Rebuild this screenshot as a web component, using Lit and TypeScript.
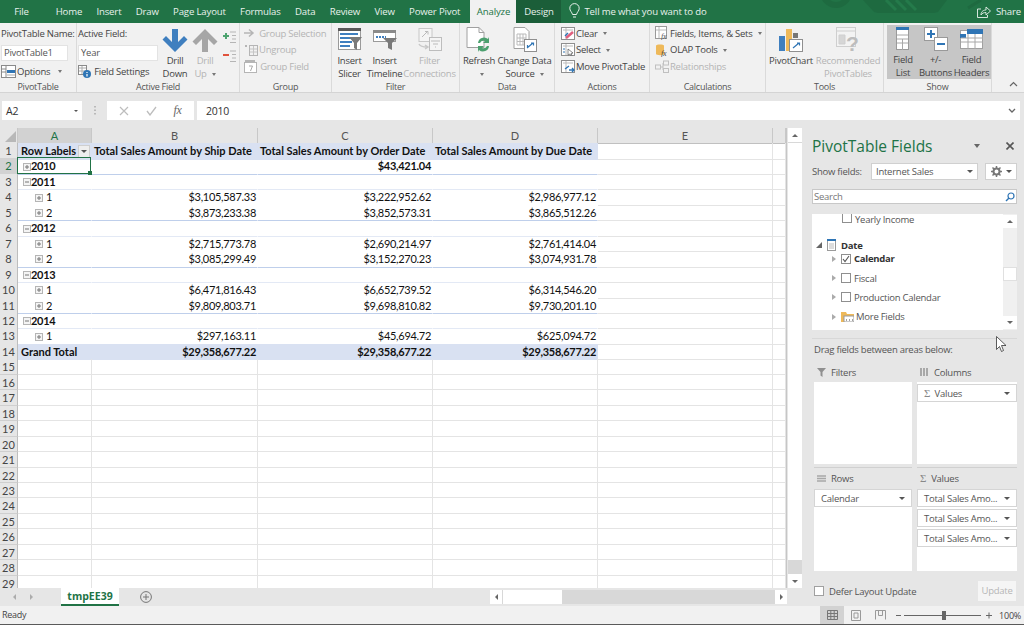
import { LitElement, html, css, svg, nothing } from 'lit';
import { customElement } from 'lit/decorators.js';

const ic = (w: number, h: number, inner: unknown) =>
  html`<svg class="ic" width="${w}" height="${h}" viewBox="0 0 ${w} ${h}" fill="none">${inner}</svg>`;

const caret = html`<i class="caret"></i>`;

// ribbon icons
const icons = {
  options: ic(15, 13, svg`<rect x=".5" y=".5" width="14" height="12" fill="#fff" stroke="#8a8a8a"/><path d="M5 1v11M1 4h4M1 7h4" stroke="#8a8a8a"/><rect x="6" y="5" width="8" height="3" fill="#2f75b5"/><path d="M6 10h8" stroke="#aaa"/>`),
  fieldSettings: ic(13, 13, svg`<rect x=".5" y=".5" width="8" height="9" fill="#fff" stroke="#8a8a8a"/><path d="M1 3h7M1 6h7M4 1v8" stroke="#aaa"/><circle cx="9" cy="9" r="4" fill="#2f75b5"/><path d="M9 7v1M9 9v2.5" stroke="#fff" stroke-width="1.2"/>`),
  drillDown: ic(26, 24, svg`<path d="M10 1h6v13l6-6 3.500 3.500L13 24 .5 11.500 4 8l6 6z" fill="#3f7fbf"/>`),
  drillUp: ic(26, 24, svg`<path d="M10 24h6V11l6 6 3.500-3.500L13 1 .5 13.500 4 17l6-6z" fill="#a6a6a6"/>`),
  expand: ic(15, 13, svg`<path d="M8 1h6M10 4.500h4M10 8h4M8 11.500h6" stroke="#b5b5b5"/><path d="M1 5h6M4 2v6" stroke="#4da36f" stroke-width="2"/>`),
  collapse: ic(15, 13, svg`<path d="M8 1h6M10 4.500h4M10 8h4M8 11.500h6" stroke="#b5b5b5"/><path d="M1 5h6" stroke="#e0533c" stroke-width="2"/>`),
  groupSel: ic(12, 10, svg`<path d="M0 5h8M5 1.500 9 5 5 8.500" stroke="#b5b5b5" stroke-width="1.500"/>`),
  ungroup: ic(14, 13, svg`<path d="M1 2l2 2M3 2 1 4" stroke="#b5b5b5"/><rect x="5.500" y="2.500" width="8" height="10" stroke="#b5b5b5"/><path d="M9.500 3v9M6 6h7M6 9h7" stroke="#c5c5c5"/>`),
  groupField: ic(13, 13, svg`<rect x=".5" y="2.500" width="12" height="10" fill="#fff" stroke="#b5b5b5"/><path d="M1 1h10" stroke="#b5b5b5" stroke-width="2"/><path d="M5 6h3.500L6.500 11" stroke="#a8a8a8"/>`),
  slicer: ic(24, 23, svg`<rect x=".5" y=".5" width="22" height="21" fill="#fff" stroke="#9a9a9a"/><rect width="23" height="3" fill="#595959"/><path d="M2 6h18M2 10h12M2 14h12M2 18h10" stroke="#3f7fbf" stroke-width="2"/><path d="M11 9h13l-5 6v7l-3-2v-5z" fill="#7a7a7a"/>`),
  timeline: ic(24, 21, svg`<rect x=".5" y="3.500" width="22" height="9" fill="#fff" stroke="#9a9a9a"/><rect y="1" width="23" height="3" fill="#8a8a8a"/><path d="M3 8h10" stroke="#3f7fbf" stroke-dasharray="2 1" stroke-width="2"/><path d="M10 9h14l-5 5v7l-4-2v-5z" fill="#7a7a7a"/>`),
  filterConn: ic(24, 23, svg`<rect x="1" y=".5" width="13" height="13" fill="#f5f5f5" stroke="#c8c8c8"/><path d="M4 9l5-5M7 3.500h3v3" stroke="#bbb"/><path d="M1 16c1 2 4 3 8 3M7 17l3 2-3 2" stroke="#c8c8c8" stroke-width="1.500"/><rect x="11.500" y="9.500" width="12" height="13" fill="#f5f5f5" stroke="#bdbdbd"/><path d="M13 13h9M15 16h5M17 19h1" stroke="#bbb"/>`),
  refresh: ic(26, 26, svg`<path d="M1 .5h12l5 5v15H1z" fill="#fff" stroke="#a0a0a0"/><path d="M13 .5v5h5" stroke="#a0a0a0"/><path d="M12 16a6 6 0 0 1 10-4l1-2v6h-6l2-2a4 4 0 0 0-5 2zM23 19a6 6 0 0 1-10 4l-1 2v-6h6l-2 2a4 4 0 0 0 5-2z" fill="#4ca06f"/>`),
  changeSrc: ic(24, 26, svg`<path d="M1 .5h11l4 4v17H1z" fill="#fff" stroke="#a0a0a0"/><path d="M4 7h9v11H4zM7 7v11M10 7v11M4 11h9M4 14.500h9" stroke="#bbb"/><rect x="11.500" y="12.500" width="12" height="12" fill="#fff" stroke="#8f8f8f"/><path d="M14 21l6-5M18 16h2.500v2.500M14.500 20.500V18" stroke="#2f75b5" stroke-width="1.200"/>`),
  clear: ic(14, 13, svg`<rect x=".5" y=".5" width="13" height="12" fill="#fff" stroke="#8f8f8f"/><path d="M2 3h10M5 1v11" stroke="#bbb"/><path d="M5 11l7-6" stroke="#e0607e" stroke-width="2.500"/><path d="M7 6l-3 3" stroke="#2f75b5" stroke-width="1.500"/>`),
  select: ic(14, 13, svg`<rect x=".5" y=".5" width="13" height="12" fill="#fff" stroke="#8f8f8f"/><path d="M2 3h10M5 1v11" stroke="#bbb"/><path d="M7 6l5 4-2 .5 1 2-1 .5-1-2-2 1z" fill="#fff" stroke="#555" stroke-width=".7"/><path d="M2 6h2M2 9h2" stroke="#2f75b5"/>`),
  move: ic(14, 13, svg`<rect x=".5" y=".5" width="13" height="12" fill="#fff" stroke="#8f8f8f"/><path d="M2 3h10M5 1v11" stroke="#bbb"/><path d="M4 9l4-3M8 10h5M11 8l2 2-2 2" stroke="#2f75b5" stroke-width="1.300"/>`),
  fields: ic(14, 14, svg`<rect x=".5" y=".5" width="11" height="12" fill="#fff" stroke="#9a9a9a"/><path d="M1 4h10M4 1v11" stroke="#bbb"/><text x="6" y="13" font-size="8" font-style="italic" font-family="Liberation Serif" fill="#555">fx</text>`),
  olap: ic(14, 14, svg`<path d="M1 2.500C1 1 9 1 9 2.500V11c0 1.500-8 1.500-8 0z" fill="#eeb95a"/><text x="6" y="13" font-size="8" font-style="italic" font-family="Liberation Serif" fill="#444">fx</text>`),
  rel: ic(14, 13, svg`<rect x=".5" y="5" width="5" height="4" stroke="#c0c0c0"/><rect x="8.500" y="1" width="5" height="4" stroke="#c0c0c0"/><rect x="8.500" y="8.500" width="5" height="4" stroke="#c0c0c0"/><path d="M6 7h2M8 3v7" stroke="#c0c0c0"/>`),
  chart: ic(26, 24, svg`<rect x="1" y="8" width="6" height="15" fill="#3f7fbf"/><rect x="8" y="1" width="6" height="22" fill="#eeb95a"/><rect x="15" y="5" width="5" height="5" fill="#777"/><rect x="11.500" y="11.500" width="13" height="12" fill="#fff" stroke="#8f8f8f"/><path d="M15 20l6-5M19 15h2.500v2.500" stroke="#2f75b5" stroke-width="1.200"/>`),
  recommended: ic(24, 25, svg`<rect x=".5" y=".5" width="19" height="19" fill="#f3f3f3" stroke="#cfcfcf"/><path d="M1 4h18M3 8h6v9H3z" fill="#d6d6d6" stroke="#cfcfcf"/><text x="10" y="24" font-size="21" font-weight="700" font-family="Liberation Sans" fill="#bdbdbd">?</text>`),
  fieldList: ic(14, 24, svg`<rect x=".5" y=".5" width="12" height="22" fill="#fff" stroke="#9a9a9a"/><rect width="13" height="3" fill="#2f75b5"/><path d="M1 8h11M1 12h11M1 16h11M6.500 12v11" stroke="#a8a8a8"/>`),
  plusMinus: ic(24, 24, svg`<rect x=".5" y=".5" width="13" height="13" fill="#fff" stroke="#999"/><path d="M3 7h8M7 3v8" stroke="#2f75b5" stroke-width="2"/><rect x="10.500" y="10.500" width="13" height="13" fill="#fff" stroke="#999"/><path d="M13 17h8" stroke="#2f75b5" stroke-width="2"/>`),
  headers: ic(24, 22, svg`<rect x=".5" y="2.500" width="22" height="18" fill="#fff" stroke="#a0a0a0"/><rect x="7" y="1" width="16" height="5" fill="#2f75b5"/><rect x="0" y="6" width="6" height="4" fill="#2f75b5"/><path d="M1 10h22M1 14h22M8 6v15M15 6v15" stroke="#a8a8a8"/>`),
};

type Big = { icon: unknown; lines: unknown[]; off?: boolean; width: number };
const big = (b: Big) => html`
  <div class="big ${b.off ? 'off' : ''}" style="width:${b.width}px">
    <div class="big-icon">${b.icon}</div>
    ${b.lines.map((l) => html`<div class="big-line">${l}</div>`)}
  </div>`;
const small = (icon: unknown, text: unknown, off = false) => html`
  <div class="small ${off ? 'off' : ''}">${icon}<span>${text}</span></div>`;
const group = (label: string, width: number, body: unknown) => html`
  <section class="group" style="width:${width}px">
    <div class="group-body">${body}</div>
    <div class="group-label">${label}</div>
  </section>`;

const TABS = ['Home', 'Insert', 'Draw', 'Page Layout', 'Formulas', 'Data', 'Review', 'View', 'Power Pivot'];

type Row = { a: string; b?: string; c?: string; d?: string; kind: 'head' | 'year' | 'sub' | 'first' | 'total' };
const ROWS: Row[] = [
  { a: 'Row Labels', b: 'Total Sales Amount by Ship Date', c: 'Total Sales Amount by Order Date', d: 'Total Sales Amount by Due Date', kind: 'head' },
  { a: '2010', c: '$43,421.04', kind: 'first' },
  { a: '2011', kind: 'year' },
  { a: '1', b: '$3,105,587.33', c: '$3,222,952.62', d: '$2,986,977.12', kind: 'sub' },
  { a: '2', b: '$3,873,233.38', c: '$3,852,573.31', d: '$3,865,512.26', kind: 'sub' },
  { a: '2012', kind: 'year' },
  { a: '1', b: '$2,715,773.78', c: '$2,690,214.97', d: '$2,761,414.04', kind: 'sub' },
  { a: '2', b: '$3,085,299.49', c: '$3,152,270.23', d: '$3,074,931.78', kind: 'sub' },
  { a: '2013', kind: 'year' },
  { a: '1', b: '$6,471,816.43', c: '$6,652,739.52', d: '$6,314,546.20', kind: 'sub' },
  { a: '2', b: '$9,809,803.71', c: '$9,698,810.82', d: '$9,730,201.10', kind: 'sub' },
  { a: '2014', kind: 'year' },
  { a: '1', b: '$297,163.11', c: '$45,694.72', d: '$625,094.72', kind: 'sub' },
  { a: 'Grand Total', b: '$29,358,677.22', c: '$29,358,677.22', d: '$29,358,677.22', kind: 'total' },
];

const boxPlus = html`<svg class="ic" width="8" height="8" viewBox="0 0 8 8"><rect x=".5" y=".5" width="7" height="7" fill="#f4f4f4" stroke="#b5b5b5"/><path d="M2 4h4M4 2v4" stroke="#777"/></svg>`;
const boxMinus = html`<svg class="ic" width="8" height="8" viewBox="0 0 8 8"><rect x=".5" y=".5" width="7" height="7" fill="#f4f4f4" stroke="#b5b5b5"/><path d="M2 4h4" stroke="#777"/></svg>`;

const chip = (text: string) => html`<div class="chip"><span>${text}</span><i class="caret dark"></i></div>`;
const sigma = html`<span class="sigma">Σ</span>`;

@customElement('app-root')
export class AppRoot extends LitElement {
  static styles = css`
    :host {
      display: block;
      width: 1024px;
      height: 625px;
      overflow: hidden;
      position: relative;
      background: #e6e6e6;
      font-family: "Open Sans", "Noto Sans", sans-serif;
      font-size: 9.5px;
      letter-spacing: -0.25px;
      color: #444;
    }
    .ic { display: block; flex: none; }
    .caret {
      display: inline-block;
      border: 2.5px solid transparent;
      border-top: 3px solid #777;
      border-bottom: 0;
      margin-left: 5px;
      vertical-align: middle;
    }
    .caret.dark { border-top-color: #555; border-width: 3px 3.5px 0; margin: 0; }

    /* title bar */
    .titlebar {
      height: 23px;
      background: #217346;
      color: #e8f1ec;
      display: flex;
      align-items: stretch;
      font-size: 9.6px;
      letter-spacing: -0.15px;
      position: relative;
      overflow: hidden;
    }
    .watermark { position: absolute; left: 800px; top: 0; }
    .tab { padding: 5px 7.15px 0; position: relative; white-space: nowrap; }
    .tab.file { width: 43px; padding: 5px 0 0; text-align: center; margin-right: 5.5px; box-sizing: border-box; }
    .tab.active { background: #f1f1f1; color: #217346; width: 46px; padding: 5px 0 0; text-align: center; box-sizing: border-box; margin-left: 3px; }
    .tab.design { background: #1b5e39; width: 45px; padding: 5px 0 0; text-align: center; box-sizing: border-box; }
    .tell { display: flex; align-items: flex-start; gap: 4px; padding: 3px 0 0 8px; position: relative; }
    .tell span { padding-top: 2px; }
    .share { margin-left: auto; display: flex; gap: 5px; padding: 5px 3px 0 0; position: relative; }

    /* ribbon */
    .ribbon {
      height: 70px;
      box-sizing: border-box;
      background: #f1f1f1;
      border-bottom: 1px solid #d4d4d4;
      display: flex;
      position: relative;
    }
    .group {
      height: 69px;
      border-right: 1px solid #dadada;
      display: flex;
      flex-direction: column;
      box-sizing: border-box;
      flex: none;
    }
    .group-body { flex: 1; display: flex; padding: 2px 1px 0; min-height: 0; }
    .group-label { height: 11px; line-height: 11px; text-align: center; color: #555; font-size: 9px; }
    .big { display: flex; flex-direction: column; align-items: center; text-align: center; flex: none; line-height: 13px; white-space: nowrap; }
    .big-icon { height: 29px; display: flex; align-items: center; justify-content: center; }
    .off { color: #b4b4b4; }
    .stack { display: flex; flex-direction: column; gap: 2.5px; padding-top: 1px; flex: none; }
    .small { height: 14px; display: flex; align-items: center; gap: 1px; white-space: nowrap; }
    .field-label { height: 15px; line-height: 15px; white-space: nowrap; }
    .ribbon-input {
      height: 16px;
      box-sizing: border-box;
      background: #fff;
      border: 1px solid #e3e3e3;
      padding-left: 2px;
      line-height: 14px;
      margin: 4px 0 3px;
      color: #555;
    }
    .pm { display: flex; flex-direction: column; gap: 6px; padding: 6px 0 0 2px; }
    .show { background: #c6c6c6; display: flex; height: 54px; margin: 0 0 0 2px; padding: 0 1px; }
    .collapse { position: absolute; right: 6px; bottom: 5px; }

    /* formula bar */
    .formula {
      height: 35px;
      box-sizing: border-box;
      padding: 8px 4px 8px 2px;
      display: flex;
      align-items: stretch;
      background: #e6e6e6;
      font-size: 10.5px;
    }
    .name-box {
      width: 80px;
      background: #fff;
      display: flex;
      align-items: center;
      justify-content: space-between;
      padding: 0 4px;
      box-sizing: border-box;
      color: #333;
    }
    .dots { width: 25px; display: flex; align-items: center; justify-content: center; }
    .fx {
      width: 87px;
      background: #fff;
      display: flex;
      align-items: center;
      justify-content: space-around;
      padding: 0 4px;
      box-sizing: border-box;
      margin-right: 3px;
      color: #666;
      font: italic 12px "Liberation Serif", serif;
    }
    .input {
      flex: 1;
      background: #fff;
      display: flex;
      align-items: center;
      justify-content: space-between;
      padding: 0 4px 0 9px;
      color: #333;
    }

    /* sheet */
    .main { display: flex; height: 478px; }
    .sheet { width: 804px; flex: none; display: flex; flex-direction: column; }
    .sheet-top { height: 460px; display: flex; flex: none; }
    .grid { width: 787px; flex: none; overflow: hidden; background: #fff; border-right: 1px solid #c6c6c6; box-sizing: border-box; }
    .row {
      display: grid;
      grid-template-columns: 18px 74px 166px 175px 165px 175px 13px;
      height: 15.46px;
      font-family: "Lato", sans-serif;
      font-size: 11px;
      letter-spacing: 0;
      color: #111;
    }
    .cell {
      box-sizing: border-box;
      border-right: 1px solid #e4e4e4;
      border-bottom: 1px solid #e4e4e4;
      line-height: 14.5px;
      white-space: nowrap;
      overflow: hidden;
      padding: 1px 2px 0;
      position: relative;
    }
    .num { text-align: right; letter-spacing: -0.3px; padding-right: 1px; }
    .rh {
      background: #e6e6e6;
      border-right: 1px solid #bdbdbd;
      border-bottom: 1px solid #cfcfcf;
      text-align: center;
      padding: 1px 0 0;
      color: #444;
    }
    .rh.sel { background: #d2d2d2; color: #217346; }
    .pv { border-right-color: transparent; border-bottom-color: transparent; }
    .bold { font-weight: 700; }
    .blue { background: #d9e1f2; }
    .rule { border-top: 1px solid #bfcfeb; padding-top: 0; }
    .faint { border-top: 1px solid #e3e9f5; padding-top: 0; }
    .label { display: flex; align-items: center; gap: 0; overflow: visible; padding-left: 3px; }
    .label.l1 { padding-left: 5px; letter-spacing: -0.3px; }
    .label.l2 { padding-left: 17px; gap: 3px; }
    .row-filter {
      margin-left: auto;
      width: 12px;
      height: 13px;
      box-sizing: border-box;
      background: #eee;
      border: 1px solid #cfcfcf;
      display: flex;
      align-items: center;
      justify-content: center;
      margin-right: -1px;
    }
    .selected::after {
      content: '';
      position: absolute;
      inset: -1px 0 0 -1px;
      border: 1.5px solid #217346;
    }
    .handle { position: absolute; right: -1px; bottom: -1px; width: 4px; height: 4px; background: #217346; z-index: 2; }
    .selected { overflow: visible; }
    .head-row { height: 15px; font-size: 11px; font-family: "Lato", sans-serif; letter-spacing: 0; color: #555; display: grid; grid-template-columns: 18px 74px 166px 175px 165px 175px 13px; background: #e6e6e6; }
    .ch { box-sizing: border-box; text-align: center; line-height: 15px; border-right: 1px solid #c8c8c8; border-bottom: 1px solid #c0c0c0; }
    .ch.sel { background: #d2d2d2; color: #217346; border-bottom: 1px solid #217346; }
    .ch.corner { position: relative; }
    .ch.corner::after {
      content: '';
      position: absolute;
      right: 1px;
      bottom: 1px;
      border-left: 11px solid transparent;
      border-bottom: 11px solid #b8b8b8;
    }

    .vscroll { width: 14px; margin-left: 1px; display: flex; flex-direction: column; background: #d8d8d8; }
    .sb-btn { background: #fff; display: flex; align-items: center; justify-content: center; flex: none; }
    .tri-up { border: 3px solid transparent; border-bottom: 3px solid #666; border-top: 0; }
    .tri-down { border: 3px solid transparent; border-top: 3px solid #666; border-bottom: 0; }
    .tri-left { border: 3px solid transparent; border-right: 3px solid #666; border-left: 0; }
    .tri-right { border: 3px solid transparent; border-left: 3px solid #666; border-right: 0; }
    .vscroll .sb-btn { height: 14px; }
    .vthumb { height: 417px; background: #fff; margin-top: 1px; flex: none; }

    .tabs {
      height: 18px;
      flex: none;
      display: flex;
      align-items: stretch;
      background: #e6e6e6;
    }
    .tab-nav { width: 61px; display: flex; align-items: center; gap: 14px; padding-left: 13px; box-sizing: border-box; }
    .tab-nav i { opacity: .45; }
    .sheet-tab {
      width: 58px;
      background: #fff;
      color: #217346;
      font-weight: 700;
      font-size: 10.5px;
      letter-spacing: 0;
      text-align: center;
      line-height: 16px;
      border-bottom: 2px solid #217346;
      box-sizing: border-box;
    }
    .add { width: 54px; display: flex; align-items: center; justify-content: center; }
    .hscroll { margin-left: auto; width: 297px; margin-right: 17px; display: flex; background: #d8d8d8; height: 14px; margin-top: 2px; }
    .hscroll .sb-btn { width: 12px; }
    .hthumb { width: 59px; background: #fff; margin-left: 1px; margin-right: auto; }

    /* panel */
    .panel {
      width: 220px;
      flex: none;
      box-sizing: border-box;
      padding: 0 7px 0 8px;
      display: flex;
      flex-direction: column;
      color: #555;
      font-size: 9.5px;
    }
    .panel-title { height: 35px; display: flex; align-items: center; color: #217346; font-size: 15.5px; letter-spacing: 0; }
    .panel-title .caret { margin-left: auto; border-top-color: #666; border-width: 4px 3.5px 0; }
    .panel-title .x { margin-left: 26px; margin-right: 3px; }
    .show-row { display: flex; align-items: center; height: 17px; }
    .show-label { width: 59px; flex: none; }
    .select {
      width: 107px;
      height: 17px;
      background: #fff;
      border: 1px solid #d0d0d0;
      box-sizing: border-box;
      display: flex;
      align-items: center;
      justify-content: space-between;
      padding: 0 4px;
    }
    .gear {
      margin-left: 7px;
      width: 32px;
      height: 17px;
      background: #fff;
      border: 1px solid #d0d0d0;
      box-sizing: border-box;
      display: flex;
      align-items: center;
      justify-content: center;
      gap: 4px;
    }
    .search {
      margin-top: 9px;
      height: 15px;
      background: #fff;
      border: 1px solid #c8c8c8;
      box-sizing: border-box;
      display: flex;
      align-items: center;
      justify-content: space-between;
      padding: 0 1px;
      color: #777;
    }
    .list { margin-top: 10px; height: 116px; background: #fff; display: flex; overflow: hidden; flex: none; }
    .list-items { flex: 1; }
    .f { display: flex; align-items: center; height: 19.4px; white-space: nowrap; }
    .f.first { height: 13px; margin-bottom: 11px; padding-left: 30px; gap: 3px; }
    .f.date { height: 14px; margin-bottom: -3px; font-weight: 700; color: #333; padding-left: 4px; gap: 5px; }
    .f.leaf { padding-left: 20px; gap: 3px; }
    .tri { border: 3px solid transparent; border-left: 4px solid #ababab; border-right: 0; width: 0; margin-right: 2px; }
    .cb { width: 10px; height: 10px; background: #fff; border: 1px solid #8f8f8f; flex: none; display: block; box-sizing: border-box; }
    .list-bar { width: 14px; background: #f0f0f0; display: flex; flex-direction: column; flex: none; }
    .list-bar .sb-btn { height: 13px; margin-top: 1px; }
    .list-thumb { height: 14px; background: #fff; margin-top: 39px; margin-bottom: auto; border: 1px solid #e0e0e0; box-sizing: border-box; }
    .drag { margin-top: 8px; height: 16px; line-height: 16px; padding: 3px 0 0 2px; border-top: 1px solid #d8d8d8; flex: none; }
    .areas { display: grid; grid-template-columns: 98px 100px; column-gap: 5px; margin: 6px 0 0 2px; }
    .area-head { height: 18px; box-sizing: border-box; padding: 0 0 2px 3px; display: flex; align-items: center; gap: 5px; }
    .low .area-head { padding-bottom: 4px; }
    .sigma { font-family: "Liberation Serif", serif; color: #888; font-size: 11px; }
    .area-box { height: 82px; background: #fff; display: flex; flex-direction: column; gap: 2px; }
    .area-cell.low { margin-top: 3px; border-top: 1px solid #d0d0d0; padding-top: 3px; }
    .chip {
      height: 18px;
      background: #fff;
      border: 1px solid #d5d5d5;
      box-sizing: border-box;
      display: flex;
      align-items: center;
      justify-content: space-between;
      padding: 0 6px;
      flex: none;
      white-space: nowrap;
    }
    .footer { margin: 10px 0 0 2px; display: flex; align-items: center; height: 20px; gap: 5px; }
    .update { margin-left: auto; margin-right: 1px; width: 38px; height: 20px; background: #f5f5f5; color: #b5b5b5; text-align: center; line-height: 20px; }

    /* status */
    .status {
      height: 19px;
      box-sizing: border-box;
      background: #f1f1f1;
      border-bottom: 1px solid #5a5a5a;
      display: flex;
      align-items: stretch;
      padding-left: 2px;
      font-size: 9px;
      color: #444;
    }
    .status .ready { line-height: 18px; margin-right: auto; }
    .view { width: 24px; display: flex; align-items: center; justify-content: center; }
    .view.on { background: #d2d2d2; }
    .zoom { display: flex; align-items: center; margin-left: 2px; }
    .zoom span { margin-left: 5px; margin-right: 3px; }

    .cursor { position: absolute; left: 996px; top: 336px; }
  `;

  private renderRibbon() {
    return html`
      <div class="ribbon">
        ${group('PivotTable', 77, html`
          <div class="stack" style="gap:0;width:72px">
            <div class="field-label">PivotTable Name:</div>
            <div class="ribbon-input" style="width:67px">PivotTable1</div>
            ${small(icons.options, html`Options ${caret}`)}
          </div>`)}
        ${group('Active Field', 163, html`
          <div class="stack" style="gap:0;width:82px">
            <div class="field-label">Active Field:</div>
            <div class="ribbon-input" style="width:80px">Year</div>
            ${small(icons.fieldSettings, html`&nbsp;Field Settings`)}
          </div>
          ${big({ icon: icons.drillDown, lines: ['Drill', 'Down'], width: 30 })}
          ${big({ icon: icons.drillUp, lines: ['Drill', html`Up${caret}`], off: true, width: 30 })}
          <div class="pm">${icons.expand}${icons.collapse}</div>`)}
        ${group('Group', 92, html`
          <div class="stack" style="padding-left:3px">
            ${small(icons.groupSel, html`&nbsp;Group Selection`, true)}
            ${small(icons.ungroup, 'Ungroup', true)}
            ${small(icons.groupField, html`&nbsp;Group Field`, true)}
          </div>`)}
        ${group('Filter', 128, html`
          ${big({ icon: icons.slicer, lines: ['Insert', 'Slicer'], width: 33 })}
          ${big({ icon: icons.timeline, lines: ['Insert', 'Timeline'], width: 37 })}
          ${big({ icon: icons.filterConn, lines: ['Filter', 'Connections'], off: true, width: 53 })}`)}
        ${group('Data', 95, html`
          ${big({ icon: icons.refresh, lines: ['Refresh', caret], width: 36 })}
          ${big({ icon: icons.changeSrc, lines: ['Change Data', html`Source${caret}`], width: 55 })}`)}
        ${group('Actions', 95, html`
          <div class="stack" style="padding-left:5px">
            ${small(icons.clear, html`Clear${caret}`)}
            ${small(icons.select, html`Select${caret}`)}
            ${small(icons.move, 'Move PivotTable')}
          </div>`)}
        ${group('Calculations', 116, html`
          <div class="stack" style="padding-left:4px">
            ${small(icons.fields, html`Fields, Items, & Sets${caret}`)}
            ${small(icons.olap, html`OLAP Tools${caret}`)}
            ${small(icons.rel, 'Relationships', true)}
          </div>`)}
        ${group('Tools', 118, html`
          ${big({ icon: icons.chart, lines: ['PivotChart'], width: 48 })}
          ${big({ icon: icons.recommended, lines: ['Recommended', 'PivotTables'], off: true, width: 66 })}`)}
        ${group('Show', 108, html`
          <div class="show">
            ${big({ icon: icons.fieldList, lines: ['Field', 'List'], width: 30 })}
            ${big({ icon: icons.plusMinus, lines: ['+/-', 'Buttons'], width: 35 })}
            ${big({ icon: icons.headers, lines: ['Field', 'Headers'], width: 37 })}
          </div>`)}
        <svg class="collapse" width="9" height="6" viewBox="0 0 9 6"><path d="M1 5l3.500-3.500L8 5" stroke="#666" stroke-width="1.200" fill="none"/></svg>
      </div>`;
  }

  private renderRow(r: Row, i: number) {
    const n = i + 1;
    const pivotCls =
      r.kind === 'head' || r.kind === 'total'
        ? 'pv blue bold'
        : r.kind === 'year' || r.kind === 'first'
          ? `pv bold ${r.kind === 'year' ? 'rule' : ''}`
          : `pv ${n === 4 || n === 7 || n === 10 || n === 13 ? 'faint' : ''}`;
    const numCls = r.kind === 'head' ? '' : 'num';
    return html`
      <div class="row">
        <div class="cell rh ${n === 2 ? 'sel' : ''}">${n}</div>
        <div class="cell label ${r.kind === 'sub' ? 'l2' : r.kind === 'head' || r.kind === 'total' ? '' : 'l1'} ${pivotCls} ${n === 2 ? 'selected' : ''}">
          ${r.kind === 'first' || r.kind === 'sub' ? boxPlus : r.kind === 'year' ? boxMinus : nothing}
          <span>${r.a}</span>
          ${r.kind === 'head' ? html`<span class="row-filter"><i class="caret dark" style="border-width:3px 3px 0"></i></span>` : nothing}
          ${n === 2 ? html`<i class="handle"></i>` : nothing}
        </div>
        <div class="cell ${pivotCls} ${numCls}">${r.b}</div>
        <div class="cell ${pivotCls} ${numCls}">${r.c}</div>
        <div class="cell ${pivotCls} ${numCls}">${r.d}</div>
        <div class="cell"></div>
        <div class="cell"></div>
      </div>`;
  }

  private renderEmptyRow(n: number) {
    return html`
      <div class="row">
        <div class="cell rh">${n}</div>
        <div class="cell"></div><div class="cell"></div><div class="cell"></div>
        <div class="cell"></div><div class="cell"></div><div class="cell"></div>
      </div>`;
  }

  private renderGrid() {
    const rest = Array.from({ length: 15 }, (_, i) => i + 15);
    return html`
      <div class="grid">
        <div class="head-row">
          <div class="ch corner"></div>
          <div class="ch sel">A</div>
          <div class="ch">B</div><div class="ch">C</div><div class="ch">D</div><div class="ch">E</div>
          <div class="ch"></div>
        </div>
        ${ROWS.map((r, i) => this.renderRow(r, i))}
        ${rest.map((n) => this.renderEmptyRow(n))}
      </div>`;
  }

  private renderPanel() {
    const tableIcon = html`<svg class="ic" width="9" height="12" viewBox="0 0 9 12"><rect x=".5" y=".5" width="8" height="11" fill="#fff" stroke="#9a9a9a"/><rect width="9" height="2" fill="#2f75b5"/><path d="M2 5h5M2 7h5M2 9h5" stroke="#bbb"/></svg>`;
    const checked = html`<svg class="ic" width="10" height="10" viewBox="0 0 10 10"><rect x=".5" y=".5" width="9" height="9" fill="#fff" stroke="#8f8f8f"/><path d="M2 5l2 2.500L8 2" stroke="#555" stroke-width="1.100" fill="none"/></svg>`;
    return html`
      <aside class="panel">
        <div class="panel-title">
          <span>PivotTable Fields</span>
          <i class="caret"></i>
          <svg class="x" width="8" height="8" viewBox="0 0 8 8"><path d="M.5.5l7 7M7.500.5l-7 7" stroke="#555" stroke-width="1.600"/></svg>
        </div>
        <div class="show-row">
          <span class="show-label">Show fields:</span>
          <div class="select"><span>Internet Sales</span><i class="caret dark"></i></div>
          <div class="gear">
            <svg width="11" height="11" viewBox="0 0 11 11"><circle cx="5.500" cy="5.500" r="3" fill="none" stroke="#777" stroke-width="2"/><path d="M5.500 0v2M5.500 9v2M0 5.500h2M9 5.500h2M1.500 1.500l1.500 1.500M8 8l1.500 1.500M1.500 9.500 3 8M8 3l1.500-1.500" stroke="#777" stroke-width="1.500"/></svg>
            <i class="caret dark"></i>
          </div>
        </div>
        <div class="search">
          <span>Search</span>
          <svg width="10" height="10" viewBox="0 0 10 10"><circle cx="6" cy="4" r="3" fill="none" stroke="#2f75b5" stroke-width="1.200"/><path d="M4 6 1 9" stroke="#2f75b5" stroke-width="1.500"/></svg>
        </div>
        <div class="list">
          <div class="list-items">
            <div class="f first"><i class="cb" style="margin-top:-6px"></i><span style="margin-top:-2px">Yearly Income</span></div>
            <div class="f date">
              <svg width="6" height="6" viewBox="0 0 6 6"><path d="M6 0v6H0z" fill="#666"/></svg>
              ${tableIcon}<span>Date</span>
            </div>
            <div class="f leaf"><i class="tri"></i>${checked}<b style="color:#333">Calendar</b></div>
            <div class="f leaf"><i class="tri"></i><i class="cb"></i><span>Fiscal</span></div>
            <div class="f leaf"><i class="tri"></i><i class="cb"></i><span>Production Calendar</span></div>
            <div class="f leaf">
              <i class="tri"></i>
              <svg width="13" height="11" viewBox="0 0 13 11" style="margin-right:-1px"><path d="M0 1h5l1 2h7v8H0z" fill="#eeb95a"/><rect x="3" y="5" width="10" height="6" fill="#fff" stroke="#999"/><path d="M5 9h1M8 9h1M11 9h1" stroke="#444"/></svg>
              <span>More Fields</span>
            </div>
          </div>
          <div class="list-bar">
            <div class="sb-btn"><i class="tri-up"></i></div>
            <div class="list-thumb"></div>
            <div class="sb-btn" style="margin-top:0;margin-bottom:1px"><i class="tri-down"></i></div>
          </div>
        </div>
        <div class="drag">Drag fields between areas below:</div>
        <div class="areas">
          <div class="area-cell">
            <div class="area-head"><svg width="9" height="9" viewBox="0 0 9 9"><path d="M0 0h9L5.500 4v5l-2-1.500V4z" fill="#8f8f8f"/></svg>Filters</div>
            <div class="area-box"></div>
          </div>
          <div class="area-cell">
            <div class="area-head"><svg width="9" height="8" viewBox="0 0 9 8"><path d="M1 0v8M4 0v8M7 0v8" stroke="#a8a8a8" stroke-width="2"/></svg>Columns</div>
            <div class="area-box">
              <div class="chip" style="margin-top:2px"><span>${sigma}&nbsp; Values</span><i class="caret dark"></i></div>
            </div>
          </div>
          <div class="area-cell low">
            <div class="area-head"><svg width="9" height="7" viewBox="0 0 9 7"><path d="M0 1h9M0 3.500h9M0 6h9" stroke="#a8a8a8" stroke-width="1.500"/></svg>Rows</div>
            <div class="area-box">${chip('Calendar')}</div>
          </div>
          <div class="area-cell low">
            <div class="area-head">${sigma}Values</div>
            <div class="area-box">
              ${chip('Total Sales Amo...')}${chip('Total Sales Amo...')}${chip('Total Sales Amo...')}
            </div>
          </div>
        </div>
        <div class="footer">
          <i class="cb" style="border-color:#a0a0a0"></i>
          <span>Defer Layout Update</span>
          <div class="update">Update</div>
        </div>
      </aside>`;
  }

  render() {
    return html`
      <div class="titlebar">
        <svg class="watermark" width="190" height="23" viewBox="0 0 190 23">
          <circle cx="36" cy="-8" r="13" fill="none" stroke="#1e6a40" stroke-width="6"/>
          <path d="M63 0h84l-9 12-4 1H78l-4-1z" fill="#1e6a40"/>
          <path d="M86 0l10 10M96 0l10 10M106 0l10 10" stroke="#247a4a" stroke-width="3"/>
          <path d="M168 8l13-8" stroke="#1e6a40" stroke-width="3"/>
        </svg>
        <div class="tab file">File</div>
        ${TABS.map((t) => html`<div class="tab">${t}</div>`)}
        <div class="tab active">Analyze</div>
        <div class="tab design">Design</div>
        <div class="tell">
          <svg width="11" height="16" viewBox="0 0 11 16"><path d="M3.500 11.500C3 9 .8 8 .8 5.300a4.700 4.700 0 0 1 9.400 0c0 2.700-2.200 3.700-2.700 6.200zM4 14h3" fill="none" stroke="#e8f1ec"/></svg>
          <span>Tell me what you want to do</span>
        </div>
        <div class="share">
          <svg width="14" height="13" viewBox="0 0 14 13"><path d="M4 4H.5v8.500h10V10M4 10c0-4 3-5 5-5V2l4.500 4L9 10V7.500C7 7.500 5 8 4 10z" fill="none" stroke="#e8f1ec" stroke-width=".9"/></svg>
          <span>Share</span>
        </div>
      </div>
      ${this.renderRibbon()}
      <div class="formula">
        <div class="name-box"><span>A2</span><i class="caret dark" style="border-width:2.500px 2.500px 0"></i></div>
        <div class="dots"><svg width="2" height="9" viewBox="0 0 2 9"><path d="M1 0v9" stroke="#aaa" stroke-width="1.500" stroke-dasharray="1.500 2"/></svg></div>
        <div class="fx">
          <svg width="10" height="10" viewBox="0 0 10 10"><path d="M1 1l8 8M9 1 1 9" stroke="#bdbdbd" stroke-width="1.200"/></svg>
          <svg width="11" height="10" viewBox="0 0 11 10"><path d="M1 5l3 4 6-8" stroke="#bdbdbd" stroke-width="1.300" fill="none"/></svg>
          <span>fx</span>
        </div>
        <div class="input">
          <span>2010</span>
          <svg width="8" height="5" viewBox="0 0 8 5"><path d="M1 1l3 3 3-3" stroke="#666" stroke-width="1.300" fill="none"/></svg>
        </div>
      </div>
      <div class="main">
        <div class="sheet">
          <div class="sheet-top">
            ${this.renderGrid()}
            <div class="vscroll">
              <div class="sb-btn"><i class="tri-up"></i></div>
              <div class="vthumb"></div>
              <div style="flex:1"></div>
              <div class="sb-btn"><i class="tri-down"></i></div>
            </div>
          </div>
          <div class="tabs">
            <div class="tab-nav"><i class="tri-left"></i><i class="tri-right"></i></div>
            <div class="sheet-tab">tmpEE39</div>
            <div class="add">
              <svg width="12" height="12" viewBox="0 0 12 12"><circle cx="6" cy="6" r="5.400" fill="none" stroke="#777"/><path d="M3 6h6M6 3v6" stroke="#777"/></svg>
            </div>
            <div class="hscroll">
              <div class="sb-btn"><i class="tri-left"></i></div>
              <div class="hthumb"></div>
              <div class="sb-btn"><i class="tri-right"></i></div>
            </div>
          </div>
        </div>
        ${this.renderPanel()}
      </div>
      <div class="status">
        <span class="ready">Ready</span>
        <div class="view on"><svg width="11" height="10" viewBox="0 0 11 10"><path d="M.5.5h10v9H.5zM.5 3.500h10M.5 6.500h10M3.800.5v9M7.200.5v9" fill="none" stroke="#777"/></svg></div>
        <div class="view"><svg width="10" height="11" viewBox="0 0 10 11"><path d="M.5.5h9v10h-9zM3 3h4v5H3z" fill="none" stroke="#999"/></svg></div>
        <div class="view"><svg width="11" height="10" viewBox="0 0 11 10"><path d="M.5 9.500v-9h10v9M3.500.5v5h4v-5" fill="none" stroke="#999"/></svg></div>
        <div class="zoom">
          <svg width="100" height="11" viewBox="0 0 100 11">
            <path d="M2 5.500h5M10 5.500h77M92 5.500h6M95 2.500v6" stroke="#666"/>
            <rect x="48" y="1" width="4" height="9" fill="#666"/>
          </svg>
          <span>100%</span>
        </div>
      </div>
      <svg class="cursor" width="12" height="17" viewBox="0 0 12 17"><path d="M.5.500v13l3-3 2 5 2-1-2-5h4.500z" fill="#fff" stroke="#333" stroke-width=".8"/></svg>
    `;
  }
}
